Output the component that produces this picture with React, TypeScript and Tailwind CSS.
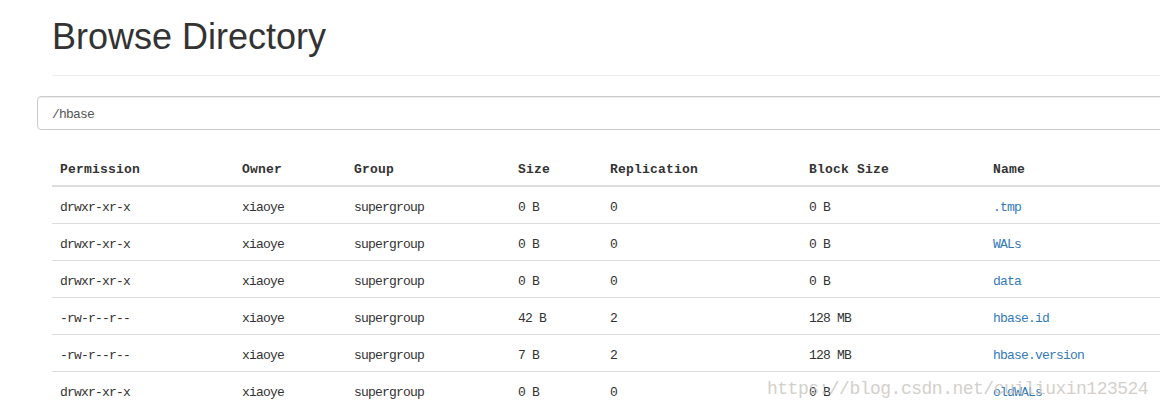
import React from "react";

const rows = [
  ["drwxr-xr-x", "xiaoye", "supergroup", "0 B", "0", "0 B", ".tmp"],
  ["drwxr-xr-x", "xiaoye", "supergroup", "0 B", "0", "0 B", "WALs"],
  ["drwxr-xr-x", "xiaoye", "supergroup", "0 B", "0", "0 B", "data"],
  ["-rw-r--r--", "xiaoye", "supergroup", "42 B", "2", "128 MB", "hbase.id"],
  ["-rw-r--r--", "xiaoye", "supergroup", "7 B", "2", "128 MB", "hbase.version"],
  ["drwxr-xr-x", "xiaoye", "supergroup", "0 B", "0", "0 B", "oldWALs"],
];

const headers = ["Permission", "Owner", "Group", "Size", "Replication", "Block Size", "Name"];

const cols = "grid grid-cols-[182px_112px_164px_92px_199px_184px_1fr]";
const mono = "font-['Liberation_Mono',monospace] text-[13px] tracking-[-0.8px]";

export default function App() {
  return (
    <div className="relative w-[1160px] h-[411px] overflow-hidden bg-white text-[#333]">
      <div className="ml-[52px] pt-[17px] pb-[18px] border-b border-[#eee]">
        <h1 className="font-['Liberation_Sans',Arial,sans-serif] text-[36px] leading-[40px] font-normal text-[#333]">
          Browse Directory
        </h1>
      </div>

      <div className="mt-[20px] ml-[37px] w-[1140px] h-[34px] border border-[#ccc] rounded-[4px] shadow-[inset_0_1px_1px_rgba(0,0,0,0.075)] flex items-center pl-[14px] pt-[3px]">
        <span className={`${mono} text-[#555]`}>/hbase</span>
      </div>

      <div className="mt-[19px] ml-[52px]">
        <div className={`${cols} border-b-2 border-[#ddd]`}>
          {headers.map((h) => (
            <div
              key={h}
              className="px-[8px] pt-[11px] pb-[5px] leading-[20px] font-['Liberation_Mono',monospace] text-[13px] font-bold tracking-[0.2px] text-[#333]"
            >
              {h}
            </div>
          ))}
        </div>
        {rows.map((r, i) => (
          <div key={i} className={`${cols} ${i > 0 ? "border-t border-[#ddd]" : ""}`}>
            {r.map((c, j) => (
              <div key={j} className={`px-[8px] pt-[11px] pb-[5px] leading-[20px] ${mono}`}>
                {j === 6 ? (
                  <a href="#" className="text-[#337ab7] no-underline">
                    {c}
                  </a>
                ) : (
                  <span className="text-[#333]">{c}</span>
                )}
              </div>
            ))}
          </div>
        ))}
      </div>

      <div className="absolute left-[767px] top-[377px] font-['Liberation_Mono',monospace] text-[18px] tracking-[-0.5px] leading-[24px] text-[#c9c5bf] opacity-80 pointer-events-none whitespace-nowrap">
        https://blog.csdn.net/cuiliuxin123524
      </div>
    </div>
  );
}
